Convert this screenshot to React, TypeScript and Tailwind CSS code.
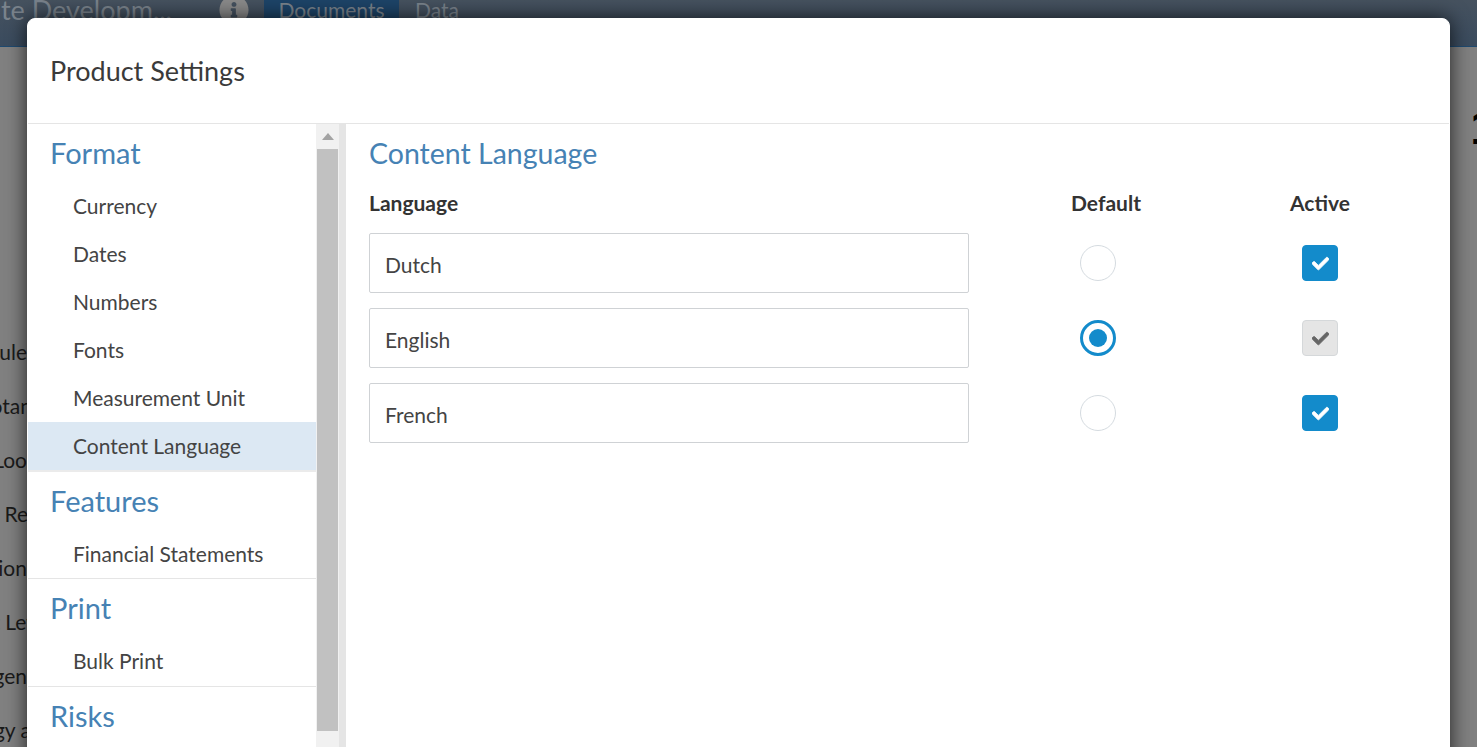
import { FaCheck, FaInfoCircle } from "react-icons/fa";

const formatItems = ["Currency", "Dates", "Numbers", "Fonts", "Measurement Unit", "Content Language"];
const languages = [
  { name: "Dutch", isDefault: false },
  { name: "English", isDefault: true },
  { name: "French", isDefault: false },
];
// text of the page under the dialog, only its right end shows
const behind = [
  { text: "ule", cls: "" },
  { text: "otan", cls: "-mr-[5px]" },
  { text: "Loo", cls: "" },
  { text: "s Re", cls: "-mr-px" },
  { text: "ion", cls: "" },
  { text: "t Lev", cls: "-mr-[10px]" },
  { text: "gen", cls: "" },
  { text: "gy a", cls: "-mr-[4px]" },
];

function SectionTitle({ children }: { children: string }) {
  return <h3 className="flex h-[58px] items-center pb-[2px] pl-[22px] text-[29px] leading-none text-[#4682b4]">{children}</h3>;
}

function NavItem({ label, active }: { label: string; active?: boolean }) {
  return (
    <div className={`flex h-12 items-center pl-[45px] text-[21px] text-[#444] ${active ? "bg-[#dce8f3]" : ""}`}>
      {label}
    </div>
  );
}

function Radio({ checked }: { checked: boolean }) {
  return (
    <span
      className={`mr-4 flex size-9 items-center justify-center rounded-full bg-white ${
        checked ? "border-[3px] border-[#138bcb]" : "border border-[#d5dbe0]"
      }`}
    >
      {checked && <span className="size-[18px] rounded-full bg-[#138bcb]" />}
    </span>
  );
}

function Checkbox({ disabled }: { disabled: boolean }) {
  return (
    <span
      className={`flex size-9 items-center justify-center rounded-[4px] border ${
        disabled ? "border-[#d5d8da] bg-[#e5e5e5] text-[#666]" : "border-[#138bcb] bg-[#138bcb] text-white"
      }`}
    >
      <FaCheck className="size-[17px] stroke-[24px]" />
    </span>
  );
}

export default function App() {
  return (
    <div className="relative h-screen overflow-hidden bg-[#808080] font-['Lato','Open_Sans',sans-serif]">
      <header className="flex h-[47px] items-start border-b border-[#1f4a70] bg-gradient-to-b from-[#46525f] to-[#3a4b5e] text-[21px] leading-none text-[#7a838c]">
        <div className="-mt-[4px] flex w-[172px] justify-end overflow-hidden whitespace-nowrap text-[27px]">
          <span className="shrink-0">ate Developm...</span>
        </div>
        <FaInfoCircle className="-mt-[5px] ml-[47px] size-[30px] text-[#8a8a8a]" />
        <div className="-mt-[1px] ml-[15px] flex h-[46px] w-[135px] justify-center bg-[#1d4468]">Documents</div>
        <div className="-mt-[1px] ml-[16px]">Data</div>
      </header>

      <div className="flex w-[27px] flex-col items-end overflow-hidden pt-[278px] text-[21px] leading-[54px] text-[#1a1a1a]">
        {behind.map((row) => (
          <div key={row.text} className={`whitespace-nowrap ${row.cls}`}>{row.text}</div>
        ))}
      </div>
      <div className="absolute right-[-20px] top-[104px] font-['Liberation_Sans',sans-serif] text-[48px] font-bold leading-none text-black">1</div>

      <div className="absolute left-[27px] top-[18px] flex h-[760px] w-[1423px] flex-col rounded-[8px] border border-white bg-white shadow-[0_0_20px_rgba(0,0,0,0.75)]">
        <div className="flex h-[105px] shrink-0 items-center border-b border-[#e5e5e5] pl-[22px] text-[27px] text-[#3a3a3a]">
          Product Settings
        </div>
        <div className="flex min-h-0 flex-1">
          <nav className="w-[288px] shrink-0">
            <div className="border-b-2 border-[#ebebeb]">
              <SectionTitle>Format</SectionTitle>
              {formatItems.map((item) => (
                <NavItem key={item} label={item} active={item === "Content Language"} />
              ))}
            </div>
            <div className="border-b border-[#e5e5e5]">
              <SectionTitle>Features</SectionTitle>
              <NavItem label="Financial Statements" />
            </div>
            <div className="border-b border-[#e5e5e5] pb-px">
              <SectionTitle>Print</SectionTitle>
              <NavItem label="Bulk Print" />
            </div>
            <SectionTitle>Risks</SectionTitle>
          </nav>

          <div className="flex w-[23px] shrink-0 flex-col bg-[#f1f1f1] px-px">
            <div className="flex h-[25px] items-start justify-center pt-[9px]">
              <span className="border-x-[6px] border-b-[7px] border-x-transparent border-b-[#a3a3a3]" />
            </div>
            <div className="h-[582px] bg-[#c1c1c1]" />
          </div>

          <main className="min-w-0 flex-1 border-l-[7px] border-[#e5e5e5] pl-[23px]">
            <h2 className="flex h-[58px] items-center text-[28.5px] leading-none text-[#4682b4]">Content Language</h2>
            <div className="flex h-[51px] items-start text-[21px] font-bold leading-[42px] text-[#333]">
              <div className="w-[600px]">Language</div>
              <div className="w-[274px] text-center">Default</div>
              <div className="w-[154px] text-center">Active</div>
            </div>
            <div className="flex flex-col gap-[15px]">
              {languages.map((lang) => (
                <div key={lang.name} className="flex items-center">
                  <input
                    readOnly
                    value={lang.name}
                    className="h-[60px] w-[600px] rounded-[2px] border border-[#cfd2d5] bg-white pl-[15px] pt-[2px] text-[21px] text-[#444] outline-none"
                  />
                  <div className="flex w-[274px] justify-center">
                    <Radio checked={lang.isDefault} />
                  </div>
                  <div className="flex w-[154px] justify-center">
                    <Checkbox disabled={lang.isDefault} />
                  </div>
                </div>
              ))}
            </div>
          </main>
        </div>
      </div>
    </div>
  );
}
